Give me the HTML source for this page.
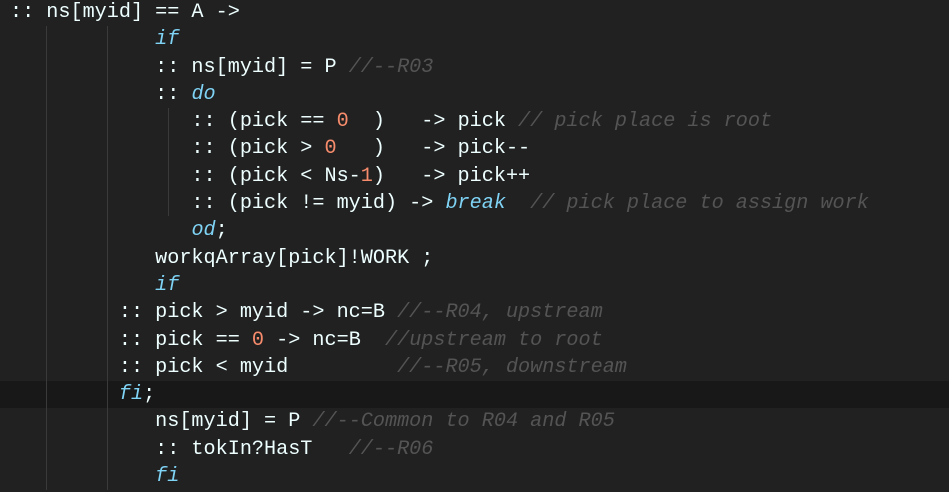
<!DOCTYPE html>
<html><head><style>
html,body{margin:0;padding:0;background:#212121;width:949px;height:492px;overflow:hidden}
.c{position:absolute;top:-1px;left:0;width:949px;font-family:"Liberation Mono",monospace;font-size:20.17px;color:#eeffff}
.l{height:27.3px;line-height:27.3px;white-space:pre;padding-left:10px}
.hl{background:#181818}
.k{color:#7fd3f5;font-style:italic}
.n{color:#f78c6c}
.m{color:#545454;font-style:italic}
.g{position:absolute;width:1px;background:#3a3a3a}
</style></head><body>
<div class="c">
<div class="l">:: ns[myid] == A -&gt;</div>
<div class="l">            <span class="k">if</span></div>
<div class="l">            :: ns[myid] = P <span class="m">//--R03</span></div>
<div class="l">            :: <span class="k">do</span></div>
<div class="l">               :: (pick == <span class="n">0</span>  )   -&gt; pick <span class="m">// pick place is root</span></div>
<div class="l">               :: (pick &gt; <span class="n">0</span>   )   -&gt; pick--</div>
<div class="l">               :: (pick &lt; Ns-<span class="n">1</span>)   -&gt; pick++</div>
<div class="l">               :: (pick != myid) -&gt; <span class="k">break</span>  <span class="m">// pick place to assign work</span></div>
<div class="l">               <span class="k">od</span>;</div>
<div class="l">            workqArray[pick]!WORK ;</div>
<div class="l">            <span class="k">if</span></div>
<div class="l">         :: pick &gt; myid -&gt; nc=B <span class="m">//--R04, upstream</span></div>
<div class="l">         :: pick == <span class="n">0</span> -&gt; nc=B  <span class="m">//upstream to root</span></div>
<div class="l">         :: pick &lt; myid         <span class="m">//--R05, downstream</span></div>
<div class="l hl">         <span class="k">fi</span>;</div>
<div class="l">            ns[myid] = P <span class="m">//--Common to R04 and R05</span></div>
<div class="l">            :: tokIn?HasT   <span class="m">//--R06</span></div>
<div class="l">            <span class="k">fi</span></div>
</div>
<div class="g" style="left:46px;top:26px;height:464px"></div>
<div class="g" style="left:107px;top:26px;height:464px"></div>
<div class="g" style="left:168px;top:108px;height:108px"></div>
</body></html>
